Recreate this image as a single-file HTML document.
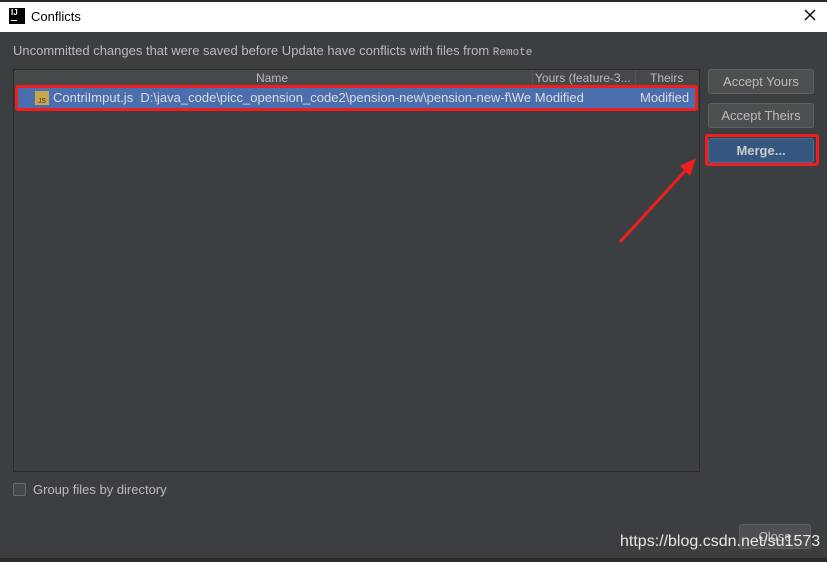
<html><head><style>
body{margin:0;width:827px;height:562px;background:#3c3f41;font-family:"Liberation Sans",sans-serif;position:relative;overflow:hidden;color:#bbb;font-size:13px}
div{position:absolute;box-sizing:border-box}
.btn{background:#4c5052;border:1px solid #5e6060;border-radius:3px;text-align:center;line-height:23px;color:#bbb}
</style></head><body>
<div style="left:0;top:0;width:827px;height:2px;background:#2b2b2b"></div>
<div style="left:0;top:2px;width:827px;height:30px;background:#fff;color:#000;font-size:13px">
 <div style="left:9px;top:6px;width:16px;height:16px;background:#000;color:#fff;font-size:8px;font-weight:bold;line-height:10px;padding-left:2px">IJ<div style="left:2px;top:12px;width:6px;height:1px;background:#fff"></div></div>
 <div style="left:31px;top:7px">Conflicts</div>
 <svg style="position:absolute;left:804px;top:7px" width="12" height="12"><path d="M1 1L11 11M11 1L1 11" stroke="#000" stroke-width="1.3"/></svg>
</div>
<div style="left:13px;top:43px">Uncommitted changes that were saved before Update have conflicts with files from <span style="font-family:'Liberation Mono';font-size:11px">Remote</span></div>
<div style="left:13px;top:69px;width:687px;height:403px;background:#3c3f41;border:1px solid #2b2b2b"></div>
<div style="left:14px;top:70px;width:685px;height:16px;background:#45494a;font-size:12px;line-height:16px">
 <div style="left:242px">Name</div>
 <div style="left:518px;width:104px;border-left:1px solid #555;border-right:1px solid #555;padding-left:2px;height:16px">Yours (feature-3...</div>
 <div style="left:636px">Theirs</div>
</div>
<div style="left:15px;top:88px;width:682px;height:20px;background:#4b6eaf;line-height:20px;color:#ddd">
 <div style="left:20px;top:3px;width:14px;height:14px;background:#c9a54c;font-size:7px;line-height:7px;color:#333;padding-top:7px;text-align:center">JS</div>
 <div style="left:38px;white-space:nowrap">ContriImput.js&nbsp; D:\java_code\picc_opension_code2\pension-new\pension-new-f\We Modified</div>
 <div style="left:625px">Modified</div>
</div>
<div style="left:15px;top:85px;width:683px;height:26px;border:3px solid #f21d1d;border-radius:3px"></div>
<div class="btn" style="left:708px;top:69px;width:106px;height:25px">Accept Yours</div>
<div class="btn" style="left:708px;top:103px;width:106px;height:25px">Accept Theirs</div>
<div class="btn" style="left:708px;top:138px;width:106px;height:25px;background:#365880;border-color:#4a6b95;font-weight:bold;color:#ccc">Merge...</div>
<div style="left:705px;top:134px;width:114px;height:32px;border:3px solid #f21d1d;border-radius:3px"></div>
<svg style="position:absolute;left:0;top:0" width="827" height="562"><line x1="620" y1="242" x2="686" y2="170" stroke="#f21d1d" stroke-width="3"/><polygon points="696,158 680,166 690,176" fill="#f21d1d"/></svg>
<div style="left:13px;top:483px;width:13px;height:13px;border:1px solid #6b6b6b;background:#43494a;border-radius:2px"></div>
<div style="left:33px;top:482px">Group files by directory</div>
<div class="btn" style="left:739px;top:524px;width:72px;height:25px">Close</div>
<div style="left:620px;top:533px;font-size:16px;color:#e8e8e8;white-space:nowrap">https://blog.csdn.net/su1573</div>
<div style="left:0;top:558px;width:827px;height:4px;background:#2b2b2b"></div>
</body></html>
